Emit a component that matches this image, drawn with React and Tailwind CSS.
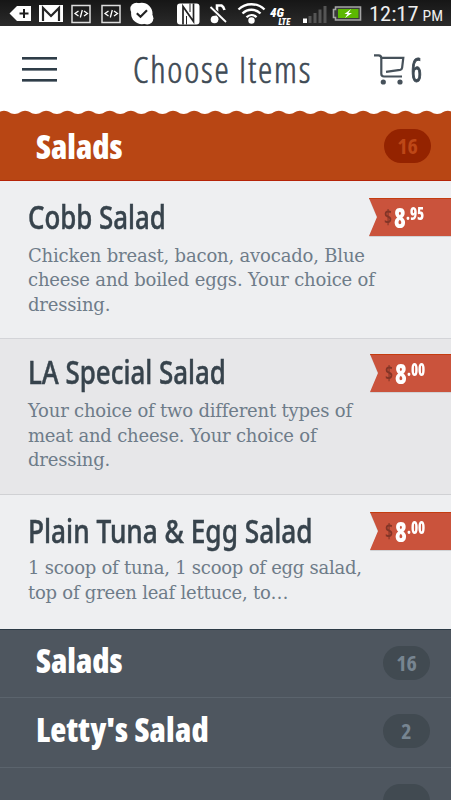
import React from 'react';

const items = [
  {
    id: 1,
    name: 'Cobb Salad',
    lines: ['Chicken breast, bacon, avocado, Blue', 'cheese and boiled eggs. Your choice of', 'dressing.'],
    dollars: '8',
    cents: '.95',
    row: 'h-[158px] pt-[17px] bg-[#eeeff1] border-b border-[#d3d4d8]',
    title: '-mt-[1px] scale-x-[.783]',
    text: 'pt-[1.500px] tracking-[-0.18px]',
    ribbon: 'w-[82px]',
  },
  {
    id: 2,
    name: 'LA Special Salad',
    lines: ['Your choice of two different types of', 'meat and cheese. Your choice of', 'dressing.'],
    dollars: '8',
    cents: '.00',
    row: 'h-[156px] pt-[15px] bg-[#e7e7e9] border-b border-[#d0d1d4]',
    title: '-mt-[2px] scale-x-[.785]',
    text: 'pt-[1px] tracking-[-0.2px]',
    ribbon: 'w-[81px]',
  },
  {
    id: 3,
    name: 'Plain Tuna & Egg Salad',
    lines: ['1 scoop of tuna, 1 scoop of egg salad,', 'top of green leaf lettuce, to…'],
    dollars: '8',
    cents: '.00',
    row: 'h-[134px] pt-[17px] bg-[#eeeff1]',
    title: '-mt-[1px] scale-x-[.795]',
    text: 'tracking-[-0.24px]',
    ribbon: 'w-[81px]',
  },
];

function StatusBar() {
  return (
    <div className="h-[26px] bg-linear-to-b from-[#161616] to-[#2b2b2b]">
      <svg width="451" height="26" viewBox="0 0 451 26" fill="none">
        {/* keyboard / battery plus */}
        <path d="M9.5 13.5 17 6h14v15H17z" fill="#fff" />
        <path d="M24 9v9M19.500 13.500h9" stroke="#1c1c1c" strokeWidth="2" />
        {/* mail */}
        <path d="M39 5h24v17H39z" fill="#fff" />
        <path d="M43 21V8l8 8 8-8v13" stroke="#262626" strokeWidth="2.200" />
        {/* code windows */}
        {[71.5, 101.5].map((x) => (
          <g key={x}>
            <rect x={x + 0.5} y="5.500" width="18" height="17" stroke="#ddd" strokeWidth="1.500" />
            <path
              d={`M${x + 7} 11l-3.500 2.500 3.500 2.500M${x + 12.5} 11l3.500 2.500-3.500 2.500M${x + 10.8} 10l-2 7.500`}
              stroke="#fff"
              strokeWidth="1.300"
            />
          </g>
        ))}
        {/* chat check */}
        <circle cx="141.800" cy="13.500" r="10.700" fill="#fff" />
        <circle cx="136.500" cy="9" r="6.200" fill="#fff" />
        <circle cx="147.200" cy="18.300" r="6.200" fill="#fff" />
        <path d="m136.800 13.300 3.700 3.500 6.500-6.500" stroke="#222" strokeWidth="2.200" />
        {/* nfc */}
        <rect x="177" y="3.500" width="22.500" height="21" rx="3" fill="#fff" />
        <path d="M183 24.500V6.500l10.500 15V3.500" stroke="#222" strokeWidth="1.700" />
        <path d="M186.500 24.500V16M190 3.500V12" stroke="#222" strokeWidth="1" />
        {/* muted note */}
        <circle cx="214.500" cy="19.500" r="3.800" fill="#fff" />
        <path d="M217 20V5.500h4.500q2 1 3 4.500" stroke="#fff" strokeWidth="2.600" />
        <path d="m210.500 7 15.500 15" stroke="#262626" strokeWidth="4" />
        <path d="m210.500 7 15.500 15" stroke="#fff" strokeWidth="1.800" />
        {/* wifi */}
        <g stroke="#fff" strokeWidth="2.300">
          <path d="M238.500 9.500c7-7 19-7 26 0" />
          <path d="M242.500 13.500c5-5 13-5 18 0" />
          <path d="M246.500 17.300c3-3 7-3 10 0" />
        </g>
        <circle cx="251.500" cy="20.500" r="3.200" fill="#fff" />
        {/* signal */}
        <path d="M303 18.500h4V23h-4z" fill="#fff" />
        <path d="M308.500 16h3v7h-3zM313.500 13h3v10h-3zM318.500 9.500h3V23h-3zM323.500 6h3v17h-3z" fill="#555" />
        {/* battery */}
        <path d="M335.500 7h25v13h-25v-2.500h-2v-8h2z" fill="#3a3a3a" stroke="#a5a5a5" strokeWidth="1.600" />
        <path d="M338 9h20.500v9H338z" fill="#5cb800" />
        <path d="m351 9-6.500 5h3l-2.500 4 7-5h-3.500z" fill="#fff" />
        <g fill="#fff" fontFamily="Roboto, sans-serif">
          <text fontWeight="900" fontStyle="italic">
            <tspan x="270" y="17" fontSize="13">4G</tspan>
            <tspan x="278.500" y="25" fontSize="8.500">LTE</tspan>
          </text>
          <text x="369" y="21" fontSize="20" fill="#eee" textLength="49.500" lengthAdjust="spacingAndGlyphs">12:17</text>
          <text x="422.500" y="21" fontSize="14" fill="#eee" textLength="20.500" lengthAdjust="spacingAndGlyphs">PM</text>
        </g>
      </svg>
    </div>
  );
}

function CartIcon() {
  return (
    <svg width="34" height="34" viewBox="0 0 34 34" fill="none" stroke="#46515a" strokeWidth="2.200">
      <path d="M0 1.300h4.500q2.800 0 2.800 3v15.500q0 2.700 2.700 2.700H28" />
      <path d="M7.300 3.800h22l-1.200 10q-.2 1.700-2 2L12 17.800" />
      <circle cx="9.300" cy="28" r="2.600" fill="#46515a" stroke="none" />
      <circle cx="26" cy="28" r="2.600" fill="#46515a" stroke="none" />
    </svg>
  );
}

function Header() {
  return (
    <header className="flex h-[84px] items-start bg-white pl-[22px]">
      <div className="flex w-[35px] flex-col gap-[8px] pt-[31px]">
        <div className="h-[3px] border-b border-[#7b858d] bg-[#2f3d48]" />
        <div className="h-[3px] border-b border-[#7b858d] bg-[#2f3d48]" />
        <div className="h-[3px] border-b border-[#7b858d] bg-[#2f3d48]" />
      </div>
      <h1 className="ml-[76px] mt-[19px] w-[238px] whitespace-nowrap text-[36px] font-light leading-[50px] tracking-[1.8px] text-[#3e4a54] [-webkit-text-stroke:0.6px_#3e4a54]">
        Choose Items
      </h1>
      <div className="mt-[28px] flex gap-[3px] pl-[3px]">
        <CartIcon />
        <span className="-mt-[9px] origin-left scale-x-[.8] text-[32px] leading-[50px] text-[#3e4a54] [-webkit-text-stroke:1px_#3e4a54]">6</span>
      </div>
    </header>
  );
}

function Scallops() {
  return (
    <svg className="block bg-white" width="451" height="5" viewBox="0 0 451 5">
      <defs>
        <pattern id="wave" x="-6.500" y="0" width="21.130" height="5" patternUnits="userSpaceOnUse">
          <path d="M0 5V4C5 4 6 .8 10.560.8S16.100 4 21.130 4V5z" fill="#b84614" />
        </pattern>
      </defs>
      <rect width="451" height="5" fill="url(#wave)" />
    </svg>
  );
}

function CountBadge({ count, className }) {
  return (
    <span className={`flex h-[34px] w-[47px] items-center justify-center rounded-full pb-[2px] text-[22px] font-bold ${className}`}>
      {count}
    </span>
  );
}

function PriceRibbon({ dollars, cents, className }) {
  return (
    <div className={`h-[38px] shrink-0 drop-shadow-[0_1.5px_0_#d0d2d5] ${className}`}>
      <div className="flex h-full items-start border-t border-[#c43c10] bg-[#ca533c] pl-[15px] [clip-path:polygon(0_0,100%_0,100%_100%,0_100%,8px_50%)]">
        <span className="mt-[6px] w-[10px] origin-left scale-x-90 text-[19px] font-bold leading-[24px] text-[#833527]">$</span>
        <span className="mt-[3px] w-[12px] origin-left scale-x-[.85] text-[28px] font-extrabold leading-[30px] text-white">{dollars}</span>
        <span className="mt-[1px] origin-left scale-x-[.8] text-[18px] font-extrabold leading-[26px] text-white">{cents}</span>
      </div>
    </div>
  );
}

function MenuItem({ item }) {
  return (
    <li className={item.row}>
      <div className="flex h-[44px] justify-between pl-[28px]">
        <h3 className={`w-0 origin-top-left whitespace-nowrap font-['Noto_Sans','Open_Sans',sans-serif] text-[33px] font-medium leading-[39px] text-[#37434c] [-webkit-text-stroke:0.5px_#37434c] ${item.title}`}>
          {item.name}
        </h3>
        <PriceRibbon dollars={item.dollars} cents={item.cents} className={item.ribbon} />
      </div>
      <p className={`pl-[28px] font-['DejaVu_Serif',serif] text-[18px] leading-[24.7px] text-[#6e7c89] [font-stretch:100%] ${item.text}`}>
        {item.lines.map((line) => (
          <span key={line} className="block whitespace-nowrap">{line}</span>
        ))}
      </p>
    </li>
  );
}

export default function App() {
  return (
    <div className="h-[800px] w-[451px] overflow-hidden bg-[#4e565f] font-['Open_Sans',sans-serif] [font-stretch:75%]">
      <StatusBar />
      <Header />
      <Scallops />

      <div className="flex h-[66px] items-start justify-between border-b border-[#b52408] bg-[#b84614] pl-[36px] pr-[20px]">
        <h2 className="mt-[7px] text-[33px] font-extrabold leading-[50px] text-white">Salads</h2>
        <CountBadge count="16" className="mt-[14px] bg-[#942300] text-[#bd4717]" />
      </div>

      <ul>
        {items.map((item) => (
          <MenuItem key={item.id} item={item} />
        ))}
      </ul>

      {/* Collapsed categories */}
      <div className="flex h-[69px] items-start justify-between border-b border-t border-b-[#5b646d] border-t-[#2c3a46] pl-[36px] pr-[21px]">
        <h2 className="mt-[6px] text-[33px] font-extrabold leading-[50px] text-white">Salads</h2>
        <CountBadge count="16" className="mt-[16px] bg-[#414a51] text-[#778591]" />
      </div>
      <div className="flex h-[70px] items-start justify-between border-b border-[#5b646d] pl-[36px] pr-[21px]">
        <h2 className="mt-[7px] text-[33px] font-extrabold leading-[50px] tracking-[0.2px] text-white">Letty's Salad</h2>
        <CountBadge count="2" className="mt-[16px] bg-[#414a51] text-[#778591]" />
      </div>
      <div className="flex justify-end pr-[21px]">
        <CountBadge count="" className="mt-[16px] bg-[#414a51]" />
      </div>
    </div>
  );
}
